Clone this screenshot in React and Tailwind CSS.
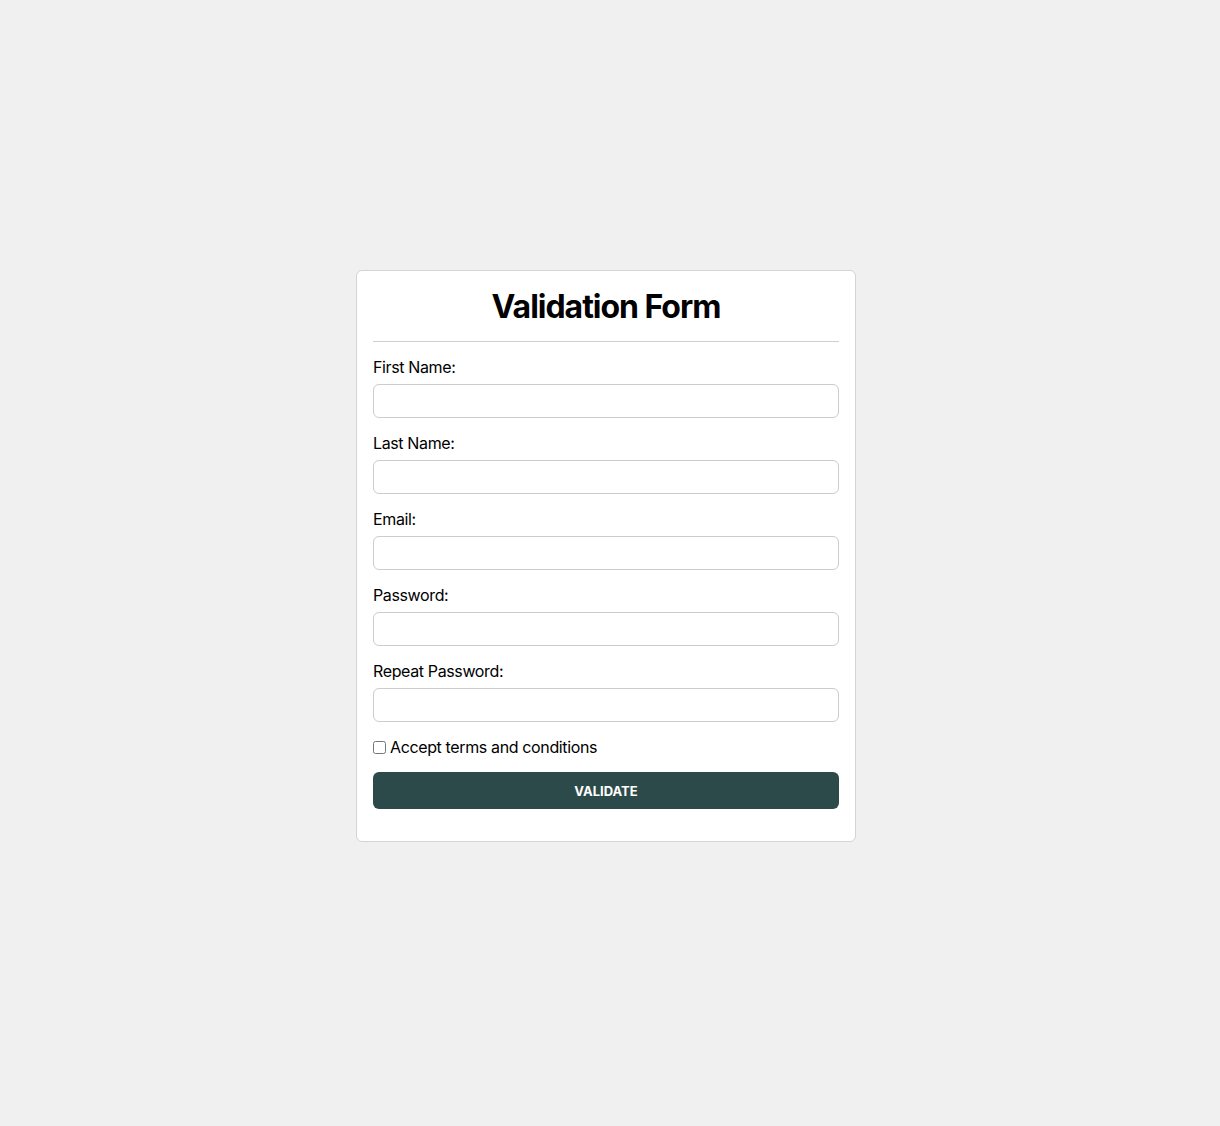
export default function App() {
  const fields = [
    { label: "First Name:", type: "text" },
    { label: "Last Name:", type: "text" },
    { label: "Email:", type: "email" },
    { label: "Password:", type: "password" },
    { label: "Repeat Password:", type: "password" },
  ];

  return (
    <div
      className="min-h-screen bg-[#f0f0f0] flex items-center justify-center pr-[8px] pb-[14px]"
      style={{ fontFamily: "Inter, 'Noto Sans', sans-serif" }}
    >
      <form className="w-[500px] bg-white border border-[#d4d4d4] rounded-[6px] p-4 text-black tracking-[-0.023em]">
        <h1 className="text-[32px] leading-[40px] font-bold text-center tracking-[-0.032em]">
          Validation Form
        </h1>
        <hr className="mt-[14px] mb-[13px] border-0 border-t border-[#cfcfcf]" />
        {fields.map((f) => (
          <div key={f.label} className="mb-[13px]">
            <label className="block text-base leading-6 mb-[5px]">{f.label}</label>
            <input
              type={f.type}
              className="block w-full h-[34px] border border-[#cccccc] rounded-[6px] px-2"
            />
          </div>
        ))}
        <label className="flex items-center text-base leading-6 mb-[13px]">
          <input type="checkbox" className="w-[13px] h-[13px] ml-0 mr-[4px]" />
          Accept terms and conditions
        </label>
        <button
          type="button"
          className="w-full h-[37px] pt-[2px] rounded-[6px] bg-[#2d4a4a] text-white text-[13px] font-bold uppercase tracking-normal mb-4"
        >
          Validate
        </button>
      </form>
    </div>
  );
}
